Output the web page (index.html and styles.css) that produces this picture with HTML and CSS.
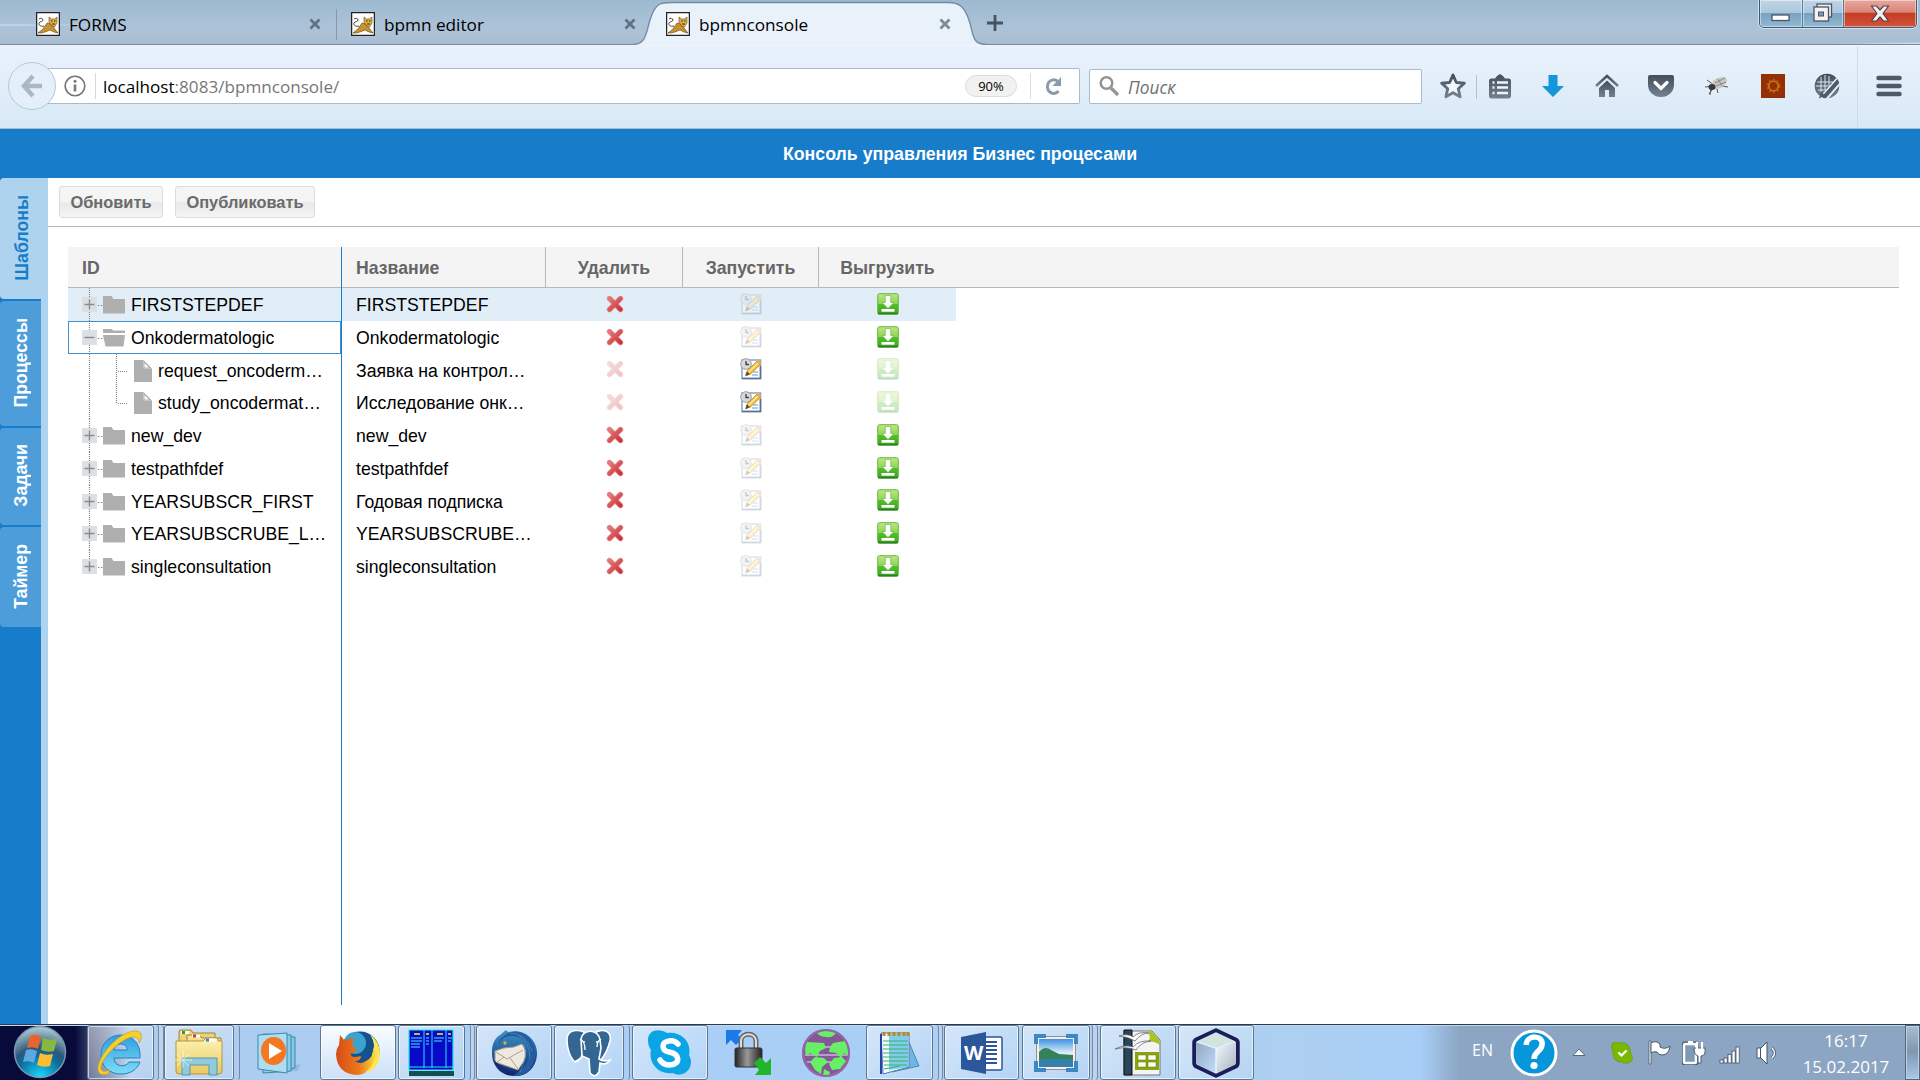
FILE: index.html
```html
<!DOCTYPE html>
<html lang="ru">
<head>
<meta charset="utf-8">
<title>bpmnconsole</title>
<link rel="stylesheet" href="styles.css">
</head>
<body>
<svg class="defs" aria-hidden="true">
  <defs>
    <linearGradient id="steel" x1="0" y1="0" x2="0" y2="1"><stop offset="0" stop-color="#434e5a"/><stop offset="1" stop-color="#748290"/></linearGradient>
    <linearGradient id="red" x1="0" y1="0" x2="1" y2="1"><stop offset="0" stop-color="#e07a7a"/><stop offset="1" stop-color="#cc3338"/></linearGradient>
    <linearGradient id="green" x1="0" y1="0" x2="0" y2="1"><stop offset="0" stop-color="#bfe67f"/><stop offset=".5" stop-color="#8dd552"/><stop offset=".52" stop-color="#50bf28"/><stop offset="1" stop-color="#3fa61f"/></linearGradient>
    <radialGradient id="orb" cx=".5" cy="1" r="1"><stop offset="0" stop-color="#19dcff"/><stop offset=".45" stop-color="#0b6c9c"/><stop offset=".6" stop-color="#2a5878"/><stop offset="1" stop-color="#b9cfd9"/></radialGradient>
    <linearGradient id="sky" x1="0" y1="0" x2="0" y2="1"><stop offset="0" stop-color="#3f92e4"/><stop offset=".5" stop-color="#dceefa"/></linearGradient>
    <linearGradient id="iefill" x1="0" y1="0" x2="0" y2="1"><stop offset="0" stop-color="#2b9fe0"/><stop offset="1" stop-color="#7edcf8"/></linearGradient>
    <linearGradient id="manila" x1="0" y1="0" x2="0" y2="1"><stop offset="0" stop-color="#fdf3b4"/><stop offset="1" stop-color="#e9c961"/></linearGradient>
    <linearGradient id="fox" x1="0" y1="0" x2="1" y2="0"><stop offset="0" stop-color="#d64b16"/><stop offset=".6" stop-color="#ee7a1a"/><stop offset="1" stop-color="#fbd83c"/></linearGradient>
    <linearGradient id="metal" x1="0" y1="0" x2="1" y2="0"><stop offset="0" stop-color="#222"/><stop offset=".45" stop-color="#999"/><stop offset="1" stop-color="#222"/></linearGradient>
    <linearGradient id="bird" x1="0" y1="0" x2="0" y2="1"><stop offset="0" stop-color="#3a93c8"/><stop offset="1" stop-color="#12266e"/></linearGradient>
    <linearGradient id="cubeleft" x1="0" y1="0" x2="1" y2="1"><stop offset="0" stop-color="#8faac0"/><stop offset="1" stop-color="#c3dcff"/></linearGradient>
    <linearGradient id="cuberight" x1="0" y1="0" x2="1" y2="1"><stop offset="0" stop-color="#f2f8ff"/><stop offset="1" stop-color="#a8b2bc"/></linearGradient>
    <symbol id="tomcat" viewBox="0 0 24 24"><rect x=".6" y=".6" width="22.8" height="22.8" fill="#fff" stroke="#222" stroke-width="1.3"/><path d="M2 21l5-4 4-6 4 1 3 4 4 5-4-1-4-2-5 2-4 1z" fill="#c8922e" stroke="#593c14" stroke-width=".6"/><path d="M13 5l2.500 2h3L21 5v6l-2.500 4-3-1-2.500-4z" fill="#dfb145" stroke="#5f4619" stroke-width=".6"/><path d="M8 14c-3 1-6-1-5-3s4-1 4-3-3-2-4-1" fill="none" stroke="#333" stroke-width=".9"/><path d="M15 9h1.500M18 9h1.500M16 12h3" stroke="#422" stroke-width="1"/></symbol>
    <symbol id="close" viewBox="0 0 12 12"><path d="M1.500 1.500l9 9M10.500 1.500l-9 9" stroke="#61717f" stroke-width="2.800"/></symbol>
    <symbol id="del" viewBox="0 0 18 18"><path d="M3.500 3.500l11 11M14.500 3.500l-11 11" stroke="#e58d8f" stroke-width="5.400" stroke-linecap="round"/><path d="M3.500 3.500l11 11M14.500 3.500l-11 11" stroke="url(#red)" stroke-width="4" stroke-linecap="round"/></symbol>
    <symbol id="run" viewBox="0 0 22 22"><rect x="2" y="2" width="18.500" height="18.500" fill="#fff" stroke="#8fa8c4" stroke-width="1.600"/><path d="M2 20.500h18.500V8" fill="none" stroke="#5d7288" stroke-width="1.600"/><path d="M13 14h5M12 17h6" stroke="#5a98d8" stroke-width="1.200"/><circle cx="6" cy="6" r="5.300" fill="#d7dadd" stroke="#9c9fa2" stroke-width="1"/><path d="M6 3v3.500h3" fill="none" stroke="#444" stroke-width="1.400"/><path d="M5.500 18l1.500-5 10-10 4 3L10.500 16z" fill="#f3bb3c" stroke="#a97126" stroke-width=".6"/><path d="M8 15L18 5" stroke="#ffec96" stroke-width="1.500"/><path d="M5.500 18l1.500-4.500 3 2.500z" fill="#5b4230"/><path d="M16 4l1.500-1.500h2l2 2-1.500 2.500z" fill="#eda567"/></symbol>
    <symbol id="down" viewBox="0 0 22 22"><rect x=".7" y=".7" width="20.600" height="20.600" rx="1.800" fill="url(#green)" stroke="#67b548" stroke-width="1"/><path d="M1 20.500h20" stroke="#2c7f28" stroke-width="1.500"/><path d="M8.300 2.500h5.400v7h3.200L11 15.500 5.100 9.500h3.200z" fill="#fff" stroke="#62b044" stroke-width=".6"/><rect x="4.500" y="16" width="13" height="2.700" fill="#fff"/></symbol>
    <symbol id="folder" viewBox="0 0 22 18"><path d="M0 0h8.500l2 3H22v14.500H0z" fill="#afafaf"/></symbol>
    <symbol id="openfolder" viewBox="0 0 22 18"><path d="M0 0h8.500l2 1.500H22V4H0z" fill="#afafaf"/><path d="M0 6h22l-1.500 11.500h-18z" fill="#afafaf"/></symbol>
    <symbol id="file" viewBox="0 0 18 22"><path d="M0 0h9.500v8.500H18V22H0z" fill="#afafaf"/><path d="M9.500 0L18 8.500H9.500z" fill="#afafaf"/><path d="M10.500 3v4.500H15z" fill="#fff"/></symbol>
    <symbol id="branchfolder" viewBox="0 0 63 33"><path d="M30 17.500h6" stroke="#888" stroke-dasharray="1.500 1.500"/><rect x="14" y="9" width="15" height="15" fill="#dcdfe3"/><path d="M16.500 16.500h10M21.500 11.500v10" stroke="#8b8b8b" stroke-width="1.400"/><use href="#folder" x="35" y="8" width="22" height="18"/></symbol>
    <symbol id="node" viewBox="0 0 63 33"><path d="M21.500 0V33" stroke="#848484" stroke-width="1.200" stroke-dasharray="1 1"/><use href="#branchfolder" width="63" height="33"/></symbol>
    <symbol id="nodelast" viewBox="0 0 63 33"><path d="M21.500 0V16" stroke="#848484" stroke-width="1.200" stroke-dasharray="1 1"/><use href="#branchfolder" width="63" height="33"/></symbol>
  </defs>
</svg>

<header class="tabstrip">
  <div class="tab"><svg class="fav"><use href="#tomcat"/></svg><span>FORMS</span><svg class="x"><use href="#close"/></svg></div>
  <div class="tab second"><svg class="fav"><use href="#tomcat"/></svg><span>bpmn editor</span><svg class="x"><use href="#close"/></svg></div>
  <div class="tab active">
    <svg class="shape" viewBox="0 0 356 45"><path d="M0 44.500C14 44.500 13 31 18 17S28 2.500 38 2.500H315C326 2.500 331 6 336 20S338 44.500 354 44.500V46H0z" fill="#e9f1fb"/><path d="M0 44.500C14 44.500 13 31 18 17S28 2.500 38 2.500H315C326 2.500 331 6 336 20S338 44.500 354 44.500" fill="none" stroke="#758ba3" stroke-width="1.400"/></svg>
    <svg class="fav"><use href="#tomcat"/></svg><span>bpmnconsole</span><svg class="x"><use href="#close"/></svg>
  </div>
  <svg class="plus" viewBox="0 0 16 16"><path d="M8 0v16M0 8h16" stroke="#46525f" stroke-width="2.800"/></svg>
  <div class="winbtns">
    <div class="min"><svg width="20" height="8"><rect x="1" y="1" width="17" height="5.500" fill="#fff" stroke="#4b5568" stroke-width="1.300"/></svg></div>
    <div class="max"><svg width="22" height="20" viewBox="0 0 22 20"><rect x="5" y="1" width="14.500" height="13" fill="#eee" stroke="#4b5568" stroke-width="1.300"/><rect x="2" y="4" width="14.500" height="14" fill="#f3f3f3" stroke="#4b5568" stroke-width="1.300"/><rect x="6.500" y="9" width="5" height="4" fill="#7e9cba" stroke="#4b5568"/></svg></div>
    <div class="quit"><svg width="22" height="20" viewBox="0 0 22 20"><path d="M2.500 2h5l3.500 4L14.500 2h5l-5.500 7.500 5.500 7.500h-5L11 13l-3.500 4h-5L8 9.500z" fill="#f2f2f2" stroke="#5b4350" stroke-width="1.200"/></svg></div>
  </div>
</header>

<nav class="navbar">
  <div class="back"><svg width="22" height="24" viewBox="0 0 22 24"><path d="M21 12H4M12 2L3 12l9 10" fill="none" stroke="#a9b8c4" stroke-width="4.500"/></svg></div>
  <div class="url">
    <svg class="info" viewBox="0 0 22 22"><circle cx="11" cy="11" r="9.800" fill="none" stroke="#777" stroke-width="1.600"/><path d="M11 9.500v7" stroke="#777" stroke-width="2.600"/><circle cx="11" cy="6.200" r="1.500" fill="#777"/></svg>
    <span class="address"><b>localhost</b>:8083/bpmnconsole/</span>
    <span class="zoom">90%</span>
    <span class="reload"><svg width="18" height="20" viewBox="0 0 18 20"><path d="M13.500 5.200A6.300 6.800 0 1 0 14.500 15" fill="none" stroke="#8b9aa9" stroke-width="3"/><path d="M17 1v9H8.500z" fill="#8b9aa9"/></svg></span>
  </div>
  <div class="search"><svg width="21" height="22" viewBox="0 0 21 22"><circle cx="7.500" cy="8" r="5.800" fill="none" stroke="#949494" stroke-width="2.500"/><path d="M12 13l7 7" stroke="#949494" stroke-width="3.200"/></svg><span>Поиск</span></div>
  <div class="tools">
    <svg class="t-star" viewBox="0 0 26 26"><path d="M13 2l3.300 7.500 8 .8-6 5.500 1.800 8L13 19.800l-7.100 4 1.800-8-6-5.500 8-.8z" fill="#f3f7fb" stroke="url(#steel)" stroke-width="2.900" stroke-linejoin="round"/></svg>
    <i class="t-sep"></i>
    <svg class="t-list" viewBox="0 0 22 25"><path d="M2.500 4.500H6L8 2l3-2 3 2 2 2.500h3.500Q22 4.500 22 7v15q0 2.500-2.500 2.500h-17Q0 24.500 0 22V7q0-2.500 2.500-2.500z" fill="url(#steel)"/><path d="M3.500 8.500h2M8 8.500h11M3.500 13.500h2M8 13.500h11M3.500 19h2M8 19h11" stroke="#eef4fb" stroke-width="2.400"/></svg>
    <svg class="t-down" viewBox="0 0 22 24"><path d="M6.500 1h9v11H22L11 23 0 12h6.500z" fill="#1496d8"/></svg>
    <svg class="t-home" viewBox="0 0 24 24"><path d="M1 12L12 2l11 10" fill="none" stroke="url(#steel)" stroke-width="2.500"/><path d="M4 14l8-7.500 8 7.500v9h-6v-7h-4v7H4z" fill="url(#steel)"/></svg>
    <svg class="t-pocket" viewBox="0 0 26 24"><path d="M2 1h22q2 0 2 2v8a13 12 0 0 1-26 0V3q0-2 2-2z" fill="url(#steel)"/><path d="M7 8.500l6 6 6-6" fill="none" stroke="#fff" stroke-width="3.200" stroke-linecap="round"/></svg>
    <svg class="t-bug" viewBox="0 0 24 22"><path d="M0 12l8-1M2 5l7 5M4 19l5-7M12 14l1 4M17 11l6 1M6 13l-1 7" stroke="#555" stroke-width="1"/><ellipse cx="14" cy="8" rx="8.500" ry="5" transform="rotate(-28 14 8)" fill="#c9c7c1"/><path d="M10 8l10-5M11 11l10-4M13 4l4 7" stroke="#888" stroke-width="1"/><ellipse cx="7" cy="12" rx="3.500" ry="3" fill="#39393a"/></svg>
    <svg class="t-gear" viewBox="0 0 24 24"><rect width="24" height="24" fill="#952f05"/><circle cx="12.500" cy="12" r="4.800" fill="none" stroke="#c97912" stroke-width="1.800"/><circle cx="12.500" cy="12" r="6.400" fill="none" stroke="#b05d0c" stroke-width="1.500" stroke-dasharray="2 2.100"/></svg>
    <svg class="t-globe" viewBox="0 0 26 26"><defs><clipPath id="disc"><circle cx="13" cy="13" r="12.500"/></clipPath></defs><g clip-path="url(#disc)"><circle cx="13" cy="13" r="12.500" fill="url(#steel)"/><path d="M3 9h17M2 13h14M4 17h9M7 4v15M11 2v15M15 3v9" stroke="#dce5ee" stroke-width="1"/><path d="M26 2L6 25M29 7L11 28" stroke="#eaf2fb" stroke-width="1.800"/><path d="M27 5L9 25" stroke="#4f5c69" stroke-width="3.500"/></g><path d="M5 25.500l2-7 4 4z" fill="#4f5c69"/></svg>
    <span class="t-menu"><svg width="26" height="22" viewBox="0 0 26 22"><path d="M2.500 3h21M2.500 11h21M2.500 19h21" stroke="#4d5966" stroke-width="4.500" stroke-linecap="round"/></svg></span>
  </div>
</nav>

<h1 class="title">Консоль управления Бизнес процесами</h1>

<main class="app">
  <aside class="side">
    <div class="vtab current"><span>Шаблоны</span></div>
    <div class="vtab v2"><span>Процессы</span></div>
    <div class="vtab v3"><span>Задачи</span></div>
    <div class="vtab v4"><span>Таймер</span></div>
  </aside>
  <section class="content">
    <div class="actions"><button class="b1">Обновить</button><button class="b2">Опубликовать</button></div>
    <div class="grid">
      <div class="frozen">
        <div class="head">ID</div>
        <div class="row hot"><svg class="branch"><use href="#node"/></svg>FIRSTSTEPDEF</div>
        <div class="row selected"><svg class="branch" viewBox="0 0 63 33"><path d="M21.500 0V33" stroke="#848484" stroke-width="1.200" stroke-dasharray="1 1"/><path d="M30 17.500h6" stroke="#888" stroke-dasharray="1.500 1.500"/><rect x="14" y="9" width="15" height="15" fill="#dcdfe3"/><path d="M16.500 16.500h10" stroke="#8b8b8b" stroke-width="1.400"/><use href="#openfolder" x="35" y="8" width="22" height="18"/></svg>Onkodermatologic</div>
        <div class="row"><svg class="branch child" viewBox="0 0 90 33"><path d="M21.500 0V33M48.500 0V33" stroke="#848484" stroke-width="1.200" stroke-dasharray="1 1"/><path d="M50 17.500h10" stroke="#848484" stroke-dasharray="1 1"/><use href="#file" x="66" y="6" width="18" height="22"/></svg>request_oncoderm…</div>
        <div class="row"><svg class="branch child" viewBox="0 0 90 33"><path d="M21.500 0V33M48.500 0V17" stroke="#848484" stroke-width="1.200" stroke-dasharray="1 1"/><path d="M50 17.500h10" stroke="#848484" stroke-dasharray="1 1"/><use href="#file" x="66" y="6" width="18" height="22"/></svg>study_oncodermat…</div>
        <div class="row"><svg class="branch"><use href="#node"/></svg>new_dev</div>
        <div class="row"><svg class="branch"><use href="#node"/></svg>testpathfdef</div>
        <div class="row"><svg class="branch"><use href="#node"/></svg>YEARSUBSCR_FIRST</div>
        <div class="row"><svg class="branch"><use href="#node"/></svg>YEARSUBSCRUBE_L…</div>
        <div class="row"><svg class="branch"><use href="#nodelast"/></svg>singleconsultation</div>
      </div>
      <div class="scroll">
        <div class="head cols"><span>Название</span><span>Удалить</span><span>Запустить</span><span>Выгрузить</span></div>
        <div class="row cols hot"><span>FIRSTSTEPDEF</span><svg class="del"><use href="#del"/></svg><svg class="run off"><use href="#run"/></svg><svg class="down"><use href="#down"/></svg></div>
        <div class="row cols"><span>Onkodermatologic</span><svg class="del"><use href="#del"/></svg><svg class="run off"><use href="#run"/></svg><svg class="down"><use href="#down"/></svg></div>
        <div class="row cols"><span>Заявка на контрол…</span><svg class="del off"><use href="#del"/></svg><svg class="run"><use href="#run"/></svg><svg class="down off"><use href="#down"/></svg></div>
        <div class="row cols"><span>Исследование онк…</span><svg class="del off"><use href="#del"/></svg><svg class="run"><use href="#run"/></svg><svg class="down off"><use href="#down"/></svg></div>
        <div class="row cols"><span>new_dev</span><svg class="del"><use href="#del"/></svg><svg class="run off"><use href="#run"/></svg><svg class="down"><use href="#down"/></svg></div>
        <div class="row cols"><span>testpathfdef</span><svg class="del"><use href="#del"/></svg><svg class="run off"><use href="#run"/></svg><svg class="down"><use href="#down"/></svg></div>
        <div class="row cols"><span>Годовая подписка</span><svg class="del"><use href="#del"/></svg><svg class="run off"><use href="#run"/></svg><svg class="down"><use href="#down"/></svg></div>
        <div class="row cols"><span>YEARSUBSCRUBE…</span><svg class="del"><use href="#del"/></svg><svg class="run off"><use href="#run"/></svg><svg class="down"><use href="#down"/></svg></div>
        <div class="row cols"><span>singleconsultation</span><svg class="del"><use href="#del"/></svg><svg class="run off"><use href="#run"/></svg><svg class="down"><use href="#down"/></svg></div>
      </div>
    </div>
  </section>
</main>

<footer class="taskbar">
  <div class="start"><svg width="54" height="54" viewBox="0 0 54 54"><circle cx="27" cy="27" r="25.500" fill="url(#orb)" stroke="#7797ad" stroke-width="1.500"/><path d="M17 11q6-3 11 1l-3 12q-5-3-11-1z" fill="#e8642c"/><path d="M30 13q6 3 14 1l-3 12q-6 2-13-1z" fill="#87b940"/><path d="M13 25q6-2 11 1l-3 12q-5-3-11-1z" fill="#5da8e1"/><path d="M27 28q6 3 13 1l-3 12q-7 2-13-1z" fill="#fbbd31"/></svg></div>
  <div class="task ie"><svg width="46" height="46" viewBox="0 0 46 46"><path fill-rule="evenodd" d="M44 28H18c0 9 12 10 15 4h11c-3 8-10 12-19 12C13 44 5 36 5 25S13 5 25 5c13 0 20 10 19 23zM18 20h13c0-8-12-8-13 0z" fill="url(#iefill)" stroke="#2580be" stroke-width="1"/><path d="M12 44C-2 48-1 34 12 18S42-3 45 4c1 3 0 6-2 9 0-8-8-7-16-2C15 18 4 33 5 38c0 4 4 4 9 2z" fill="#f7cf2d" stroke="#cc8d10" stroke-width=".6"/></svg></div><i class="stack two"></i>
  <div class="task explorer"><svg width="48" height="48" viewBox="0 0 48 48"><path d="M4 3q0-2 2-2h10l2 3h22v34H4z" fill="#ecd27d" stroke="#a48428"/><path d="M12 6h12l3 3h19v24H12z" fill="#f4e08d" stroke="#a48428"/><path d="M6 3.500h8" stroke="#fff" stroke-width="3"/><rect x="7" y="2" width="3" height="3" fill="#30953c"/><path d="M17 7h8" stroke="#fff" stroke-width="3"/><rect x="18" y="5.500" width="3" height="3" fill="#cf3825"/><path d="M1 12h27l3-3h12v3h4v30q0 3-3 3H4q-3 0-3-3z" fill="url(#manila)" stroke="#b99534"/><path d="M31 11h10" stroke="#fff" stroke-width="3"/><rect x="31" y="9.500" width="3" height="3" fill="#2d85c7"/><path d="M7 29h35v17h-8V36H15v10H7z" fill="#87cbe9" stroke="#4690b3" opacity=".9"/><path d="M8 22v17M0 31h17M2 25l12 12M14 25L2 37" stroke="#fff" opacity=".6"/></svg></div><i class="stack one"></i>
  <div class="plain wmp"><svg width="46" height="42" viewBox="0 0 46 42"><path d="M6 41L44 32l-4 7z" fill="#7e9dbd" opacity=".4"/><path d="M10 3l28 2v31l-28 4z" fill="#88c5e1" stroke="#378bad"/><path d="M6 2l28 1v36L6 41z" fill="#8acbe7" stroke="#378bad"/><path d="M1 3l29-2v40L1 37z" fill="#afdcf0" stroke="#378bad"/><ellipse cx="16.500" cy="19" rx="12.500" ry="14" fill="#f27822"/><path d="M12 11v16l13-8z" fill="#fff"/></svg></div>
  <div class="task bright firefox"><svg width="46" height="46" viewBox="0 0 46 46"><circle cx="25" cy="21" r="19.500" fill="#15518f"/><circle cx="20" cy="13" r="11" fill="#3ba3cf"/><path d="M35 4q10 8 10 20-1 14-13 19 6-9 5-19Q42 16 35 4z" fill="#fde452"/><path d="M5 5l5 6q4-4 9-2l-2 7q4 1 5 4-2 3-6 3-1 3 3 4 3 0 7-1 0 5-6 5 5 4 11 0 8-4 7-14 5 10-1 18Q31 45 22 45 2 44 1 24q0-5 3-9z" fill="url(#fox)"/></svg></div>
  <div class="task tc"><svg width="47" height="48" viewBox="0 0 47 48"><path d="M1 42h45v5H1z" fill="#144f50"/><path d="M1 1h44v40H1z" fill="#0808c8" stroke="#22e6ec" stroke-width="1.200"/><path d="M16 1v38M24 1v38M38 1v38M1 38h45" stroke="#22e6ec"/><path d="M6 5h6M18 5h3M29 5h6M40 5h3" stroke="#fff226" stroke-width="1.500"/><path d="M3 9h11M3 12h11M3 15h9M3 18h9M18 9h3M18 12h3M18 15h3M26 9h10M26 12h8M40 9h4M40 12h3" stroke="#43f1ed" stroke-width="1.200"/></svg></div><i class="stack three"></i>
  <div class="task bird"><svg width="48" height="48" viewBox="0 0 48 48"><path d="M16 1l2 2C36-1 48 12 47 26c-1 14-12 22-23 21C11 47 1 37 2 22c0-7 3-13 8-16z" fill="url(#bird)"/><path d="M5 22l9-3q10 0 18-4 6 8 2 17l-6 9L5 33z" fill="#efe8dc" stroke="#a19a91"/><path d="M6 23l11 7 16-9M14 28l-8 6M20 29l8 11" fill="none" stroke="#aaa092"/><path d="M9 17q1-9 12-10 13 0 17 12 4 14-10 24l-5 4q20 0 22-21Q45 8 30 3 20 1 14 7q-6 4-5 10z" fill="#245c9d"/><path d="M20 4q16 0 22 18M28 6q12 6 12 24M34 15q4 12-4 28" fill="none" stroke="#4da0cf" stroke-width="1" opacity=".6"/><path d="M3 30q5 15 21 16L7 34z" fill="#142b75"/><circle cx="15" cy="14" r="1.700" fill="#d1b240"/></svg></div>
  <div class="task pg"><svg width="46" height="48" viewBox="0 0 46 48"><g fill="#336791" stroke="#fff" stroke-width="1.600"><path d="M1 11C1-1 13 1 18 3l1 12-4 14-6 4C3 28 1 17 1 11z"/><path d="M30 3c8-4 16 0 14 9-2 8-5 14-9 19l-7-2z"/><path d="M15 10C17-1 33 0 34 11l1 8-2 11c4 3 8 2 11 1-3 5-8 4-10 3l-1 9q-4 7-9 1l-1-14-7-3z"/></g><path d="M14 29q-1 5-5 3M14 10q5 2 5 11M35 10q-4 2-4 8" fill="none" stroke="#fff" stroke-width="1.300"/><circle cx="18" cy="13" r="1" fill="#fff"/><circle cx="31" cy="13" r="1" fill="#fff"/></svg></div><i class="stack one-b"></i>
  <div class="task skype"><svg width="46" height="46" viewBox="0 0 46 46"><path d="M1 10C1 0 12-2 20 3c14-2 25 9 22 22 7 13-6 24-16 18C11 45 1 33 4 20Q1 16 1 10z" fill="#0ba4e4"/><path d="M31 14q-4-4-9-3c-8 1-8 9 0 11 11 2 12 12 1 13q-7 0-10-5" fill="none" stroke="#fff" stroke-width="5.500" stroke-linecap="round"/></svg></div>
  <div class="plain lock"><svg width="46" height="48" viewBox="0 0 46 48"><path d="M1 1h16l-4 5 4 4-6 6-5-5-5 5z" fill="#1b79e8"/><path d="M16 20V12c0-9 15-9 15 0v8" fill="none" stroke="#666" stroke-width="5"/><path d="M16 20V12c0-9 15-9 15 0v8" fill="none" stroke="#ddd" stroke-width="2"/><rect x="10" y="19" width="27" height="19" rx="1.500" fill="url(#metal)" stroke="#333"/><path d="M29 34l6-6 6 6 5-5v17H30l4-5z" fill="#21b629"/></svg></div>
  <div class="plain globe"><svg width="50" height="50" viewBox="0 0 50 50"><circle cx="25" cy="25" r="23" fill="#855797" stroke="#9f72ab" stroke-width="2"/><path d="M5 19h40M4 27h42M6 34h38" stroke="#ba9aca" stroke-width="2"/><path d="M16 5q9-4 19 0-3 5-10 4-6 0-9-4zM6 14l17 1 2 5-6 3-3 6-7-4-4 3q-2-8 1-14zm8 15l9 1 4 4-6 5-1 7-6-4-5-8zm18-14l12-2q4 7 3 15l-4-3-3 5-5-5-7-1 1-5zm1 15l8-1 4 4-6 8-8 1-3-6zM23 41l6 3-1 4h-6z" fill="#67f065"/><circle cx="25" cy="25" r="23" fill="none" stroke="#9466a4" stroke-width="2"/></svg></div>
  <div class="task note"><svg width="42" height="46" viewBox="0 0 42 46"><path d="M27 5L40 36l-27 6z" fill="#6fb6e4" stroke="#468bb8"/><path d="M2 3h28v34L4 44z" fill="#effafa" stroke="#5577ba"/><path d="M10 4h19v33l-19 3z" fill="#53b8e4" opacity=".7"/><path d="M4 11h25M4 15h25M4 19h25M4 23h25M4 27h25M4 31h25M5 35h23M5 39l16-3" stroke="#36b46c" stroke-width="1"/><path d="M2 4v40" stroke="#2c3eaa" stroke-width="2"/><path d="M5 6V2M10 6V2M15 6V2M20 6V2M25 6V2M29 6V2" stroke="#b68a24" stroke-width="3"/></svg></div><i class="stack three"></i>
  <div class="task word"><svg width="42" height="42" viewBox="0 0 42 42"><rect x="17" y="5" width="24" height="33" rx="1.500" fill="#fff" stroke="#2b579a" stroke-width="1.500"/><path d="M24 10h12M24 14h12M24 18h12M24 22h12M24 27h12M24 31h12" stroke="#2b579a" stroke-width="2"/><path d="M0 5L25 0v42L0 37z" fill="#2b579a"/><text x="3" y="28" class="word-mark">W</text></svg></div>
  <div class="task image"><svg width="46" height="40" viewBox="0 0 46 40"><rect x="3.500" y="3.500" width="39" height="33" fill="#f3eee8" stroke="#998f88"/><path d="M1 1h12v4H5v6H1zM33 1h12v10h-4V5h-8zM1 28h4v7h8v4H1zM41 28h4v11H33v-4h8z" fill="#3a88c5"/><rect x="6" y="6" width="34" height="28" fill="url(#sky)"/><path d="M6 19q6-7 12-2l8 4 14 1v4H6z" fill="#34825a"/><path d="M6 26h34v8H6z" fill="#367faa"/></svg></div><i class="stack two-b"></i>
  <div class="task office"><svg width="48" height="48" viewBox="0 0 48 48"><path d="M10 2h28l8 9v35H10z" fill="#f4f4f4" stroke="#777"/><path d="M10 1h8v45h-8z" fill="#29455b" stroke="#111"/><path d="M33 1q12 3 13 15-7-5-12-3 4-5-1-12z" fill="#a7c71f"/><path d="M5 7q9-3 14 1 6-6 16-4-8 0-14 8-6-4-16-5zm-4 13q10-5 18-2 6-7 18-6-10 1-15 9-9-4-21-1z" fill="#fff" stroke="#667" stroke-width=".8"/><rect x="21" y="23" width="24" height="18" fill="#89a50e"/><path d="M24 26h8v5h-8zM34 26h8v5h-8zM24 33h8v5h-8zM34 33h8v5h-8z" fill="#f9fff0" stroke="#657b10" stroke-width=".5"/></svg></div>
  <div class="task cube"><svg width="48" height="50" viewBox="0 0 46 48"><path d="M23 2l19 9q2 1 2 3v19q0 3-2 4l-19 9-19-9q-2-1-2-4V14q0-2 2-3z" fill="#bbcce4" stroke="#1b1d5a" stroke-width="3.600" stroke-linejoin="round"/><path d="M23 4.500l17.500 8L23 19 5.500 12.500z" fill="#d0e5dc"/><path d="M4 14l19 6v23.500L6 35q-2-1-2-3z" fill="url(#cubeleft)"/><path d="M42 14l-19 6v23.500L40 35q2-1 2-3z" fill="url(#cuberight)"/><path d="M5 13l18 6.500 18-6.500M23 20v23" fill="none" stroke="#eaf4ff" stroke-width="1.300"/></svg></div>
  <div class="tray">
    <span class="lang">EN</span>
    <svg class="help" width="48" height="48" viewBox="0 0 48 48"><circle cx="24" cy="24" r="22" fill="#0796da" stroke="#fff" stroke-width="3"/><path d="M16 16C17 5 34 6 32 16c-1 7-8 6-8 14" fill="none" stroke="#fff" stroke-width="5.500"/><circle cx="24" cy="36.500" r="3.600" fill="#fff"/></svg>
    <svg class="up" width="14" height="9" viewBox="0 0 14 9"><path d="M7 1l6 6.500H1z" fill="#fff" stroke="#536a81"/></svg>
    <svg class="sk" width="22" height="22" viewBox="0 0 22 22"><path d="M1 2q3-4 9-1 7-1 9 6l1 5q4 7-3 9-4 1-6-1Q2 20 2 11 0 6 1 2z" fill="#7ab800" stroke="#538b12" stroke-dasharray="1 1"/><path d="M7.500 10.500l3 3 5-5" fill="none" stroke="#fff" stroke-width="2.200"/></svg>
    <svg class="flag" width="24" height="25" viewBox="0 0 24 25"><path d="M2 1h2v23H2z" fill="#fff" stroke="#46566b" stroke-width=".8"/><path d="M4 3q5-3 9 1v3q5 3 10-1-1 9-8 9-4 0-5-3-4-1-6 1z" fill="#fff" stroke="#46566b"/></svg>
    <svg class="batt" width="24" height="25" viewBox="0 0 24 25"><rect x="1.500" y="3.500" width="13" height="20" rx="1" fill="#8099b7" stroke="#46566b" stroke-width="3.800"/><rect x="2" y="4" width="12" height="19" rx="1" fill="#8099b7" stroke="#fff" stroke-width="2.500"/><path d="M6 1h5v3H6z" fill="#fff"/><path d="M12 8h11q1 8-4 8v7h-3v-7q-4-1-4-8z" fill="#fff" stroke="#485b70" stroke-width="1"/><path d="M15 2v7M20 2v7" stroke="#fff" stroke-width="2.200"/></svg>
    <svg class="signal" width="22" height="18" viewBox="0 0 22 18"><g fill="#fff" stroke="#435269" stroke-width=".8"><rect x="1" y="14" width="3.200" height="3"/><rect x="5" y="12" width="3.200" height="5"/><rect x="9" y="8.500" width="3.200" height="8.500"/><rect x="13" y="5" width="3.200" height="12"/><rect x="17" y="1" width="3.200" height="16"/></g></svg>
    <svg class="speaker" width="22" height="24" viewBox="0 0 22 24"><path d="M1 7h4l6-6v22l-6-6H1z" fill="#fff" stroke="#435269"/><path d="M4.500 7v10" stroke="#435269"/><path d="M16 7q5 5 0 10" fill="none" stroke="#435269" stroke-width="3"/><path d="M16 7q5 5 0 10" fill="none" stroke="#fff" stroke-width="1.500"/></svg>
    <div class="clock"><span>16:17</span><span>15.02.2017</span></div>
    <div class="desk"></div>
  </div>
</footer>
</body>
</html>
```
FILE: styles.css
```css
* { box-sizing: border-box; }
body { margin: 0; width: 1920px; height: 1080px; overflow: hidden; display: flex; flex-direction: column; background: #fff; font-family: "Liberation Sans", Arial, sans-serif; color: #000; }
svg { display: block; flex: none; }
.defs { position: absolute; width: 0; height: 0; }

/* browser tabs */
.tabstrip { height: 45px; flex: none; display: flex; align-items: flex-start; border-bottom: 1px solid #758ba3; font-family: "Open Sans", "Noto Sans", sans-serif; font-size: 17.200px; background: radial-gradient(ellipse at 0 25px, #cde3fa 0, rgba(190,212,235,.5) 60px, transparent 130px), radial-gradient(ellipse at 1920px 44px, #d0e6ff 0, transparent 90px), linear-gradient(#9cb9d0, #a9c1d6 50%, #aec2d6 75%, #a8bdd3); }
.tab { height: 40px; width: 336px; display: flex; align-items: center; padding-left: 36px; padding-top: 8px; position: relative; }
.tab span { margin-left: 9px; padding-top: 1px; line-height: 24px; }
.tab .x { width: 12px; height: 12px; margin-left: auto; margin-right: 15px; }
.tab.second { width: 315px; padding-left: 15px; }
.tab.second::before { content: ""; position: absolute; left: 0; top: 9px; width: 1px; height: 31px; background: #8499ae; }
.tab.active { width: 315px; padding-left: 15px; }
.tab.active > .fav, .tab.active > span, .tab.active > .x { z-index: 1; }
.tab.active .x { opacity: .8; }
.tab .shape { position: absolute; left: -18px; top: 0; width: 356px; height: 45px; }
.fav { width: 24px; height: 24px; }
.plus { width: 16px; height: 16px; margin: 15px 0 0 21px; z-index: 1; }
.winbtns { width: 158px; height: 28px; margin-left: auto; margin-right: 3px; display: flex; border: 1px solid #43576c; border-top: 0; border-radius: 0 0 5px 5px; box-shadow: 0 0 0 1px #d1e3f2; overflow: hidden; }
.winbtns div { display: flex; justify-content: center; background: linear-gradient(#c1d5e4, #a9c7de 48%, #79a2c0 50%, #92b9d3); border-right: 1px solid #597a95; box-shadow: inset 0 0 0 1px rgba(255,255,255,.45); }
.winbtns .min { width: 43px; padding-top: 14px; }
.winbtns .max { width: 41px; padding-top: 3px; }
.winbtns .quit { flex: 1; padding-top: 4px; border: 0; background: linear-gradient(#e6a89c, #dc8477 45%, #c43d25 50%, #d05438); }

/* browser toolbar */
.navbar { height: 84px; flex: none; display: flex; align-items: flex-start; background: linear-gradient(#e9f2fc, #d9e9f7); border-bottom: 1px solid #a7bccd; border-top: 1px solid #eef5fc; font-family: "Open Sans", "Noto Sans", sans-serif; }
.back { width: 48px; height: 48px; margin: 16px 0 0 8px; border-radius: 50%; border: 1px solid #b8c8d6; background: #e5effa; display: flex; align-items: center; justify-content: center; z-index: 1; }
.url { width: 1032px; height: 36px; margin: 22px 0 0 -8px; border: 1px solid #a9bacb; border-left: 0; border-radius: 0 2px 2px 0; background: #fff; display: flex; align-items: center; }
.info { width: 22px; height: 22px; margin-left: 16px; }
.address { margin-left: 9px; padding-left: 7px; padding-top: 2px; border-left: 1px solid #d8d8d8; line-height: 24px; font-size: 17.100px; color: #777; }
.address b { font-weight: 400; color: #000; }
.zoom { margin-left: auto; width: 52px; height: 22px; border-radius: 11px; border: 1px solid #ddd; background: #f1f1f1; font-size: 13px; line-height: 21px; text-align: center; }
.reload { margin-left: 13px; width: 49px; padding: 3px 0 3px 13px; border-left: 1px solid #ddd; }
.search { width: 333px; height: 35px; margin: 23px 0 0 9px; border: 1px solid #a9bacb; border-radius: 2px; background: #fff; display: flex; align-items: center; padding-left: 9px; font-size: 17.300px; font-style: italic; color: #6f6f6f; }
.search svg { margin-top: -2px; }
.search span { margin-left: 8px; padding-top: 1px; }
.tools { flex: 1; height: 82px; display: flex; align-items: center; }
.tools > svg { margin-top: -2px; }
.t-star { width: 26px; height: 26px; margin-left: 18px; }
.t-sep { width: 1px; height: 24px; margin-left: 10px; background: #b3c1cf; }
.t-list { width: 22px; height: 25px; margin-left: 12px; }
.t-down { width: 22px; height: 24px; margin-left: 31px; }
.t-home { width: 24px; height: 24px; margin-left: 31px; }
.t-pocket { width: 26px; height: 24px; margin-left: 29px; }
.t-bug { width: 24px; height: 22px; margin-left: 31px; }
.t-gear { width: 24px; height: 24px; margin-left: 32px; }
.t-globe { width: 26px; height: 26px; margin-left: 29px; }
.t-menu { margin-left: 17px; height: 82px; padding: 29px 0 0 18px; border-left: 1px solid #cfdbe6; }

/* console */
.title { height: 49px; flex: none; margin: 0; background: #177dcb; color: #fff; font-size: 17.750px; line-height: 50px; text-align: center; }
.app { height: 846px; flex: none; display: flex; }
.side { width: 48px; background: linear-gradient(90deg, #177dcb 41px, #aed3ee 41px); display: flex; flex-direction: column; }
.vtab { width: 41px; border-radius: 4px 0 0 4px; background: #4d9ddb; color: #fff; font-weight: 700; font-size: 17.700px; display: flex; align-items: center; justify-content: center; padding: 0 0 2px 2px; }
.vtab span { writing-mode: vertical-rl; transform: rotate(180deg); }
.vtab.current { width: 48px; height: 121px; background: #aed3ee; color: #177dcb; padding: 0 4px 2px 0; }
.v2 { height: 125px; margin-top: 2px; }
.v3 { height: 97px; margin-top: 2px; }
.v4 { height: 100px; margin-top: 2px; }
.content { flex: 1; }
.actions { height: 49px; border-bottom: 1px solid #b9b9b9; padding: 8px 0 0 11px; display: flex; gap: 12px; }
.actions button { height: 32px; padding: 1px 0 0; border: 1px solid #dcdcdc; border-radius: 3px; background: linear-gradient(#f5f5f5 50%, #e9e9e9 52%, #f4f4f4); color: #6a6a6a; font: 700 16.400px "Liberation Sans", Arial, sans-serif; white-space: nowrap; }
.b1 { width: 104px; }
.b2 { width: 140px; }
.grid { margin: 20px 0 0 20px; width: 1831px; height: 758px; display: flex; font-size: 17.670px; white-space: nowrap; }
.frozen { width: 274px; border-right: 1px solid #177dcb; }
.scroll { flex: 1; }
.head { height: 41px; background: #f4f4f4; border-bottom: 1px solid #b9b9b9; color: #666; font-weight: 700; line-height: 42px; }
.frozen .head { padding-left: 14px; }
.row { height: 33px; padding-top: 2px; display: flex; align-items: center; }
.row svg { margin-top: -4px; }
.row:nth-child(4n) { height: 32px; }
.hot { background: #e1eef8; }
.scroll .hot { width: 614px; }
.selected { outline: 1px solid #4290ce; outline-offset: -1px; }
.row .branch { width: 63px; height: 33px; margin-top: -2px; }
.row .branch.child { width: 90px; }
.cols { display: grid; grid-template-columns: 204px 137px 136px 137px; align-items: center; justify-items: center; }
.cols span:first-child { justify-self: stretch; padding-left: 14px; }
.head.cols span { justify-self: stretch; text-align: center; border-right: 1px solid #b9b9b9; height: 40px; }
.head.cols span:first-child { text-align: left; }
.head.cols span:last-child { border: 0; }
.del { width: 18px; height: 18px; }
.run, .down { width: 22px; height: 22px; }
.off { opacity: .28; }

/* taskbar */
.taskbar { height: 56px; flex: none; display: flex; align-items: stretch; border-top: 1px solid #293d55; background: linear-gradient(90deg, #080b3a 75px, #adcbee 130px, #a9cff7 700px, #adcff0 1300px, #a8cff8 1420px, #8ca5c3 1460px); box-shadow: inset 0 1px 0 #c3d5e6; }
.taskbar > div { flex: none; }
.start { width: 87px; display: flex; padding-left: 13px; }
.task { display: flex; align-items: center; justify-content: center; border: 1px solid #5f7590; border-radius: 3px; background: linear-gradient(135deg, rgba(255,255,255,.5), rgba(255,255,255,.1)); box-shadow: inset 0 0 0 1px rgba(255,255,255,.6); }
.task.bright { background: linear-gradient(#fafdff, #cbe0f7); }
.plain { display: flex; align-items: center; justify-content: center; }
.stack { flex: none; border: solid #7489a2; border-width: 0 1px 0 0; border-radius: 0 3px 3px 0; }
.ie { width: 67px; padding-right: 3px; }
.two { width: 10px; box-shadow: inset -4px 0 0 #bcd3eb, inset -5px 0 0 #7489a2; }
.explorer { width: 70px; }
.one { width: 6px; }
.wmp { width: 80px; }
.firefox { width: 76px; }
.tc { width: 67px; margin-left: 2px; }
.three { width: 10px; box-shadow: inset -3px 0 0 #bcd3eb, inset -4px 0 0 #7489a2; }
.bird { width: 76px; margin-left: 1px; }
.pg { width: 70px; margin-left: 2px; }
.one-b { width: 6px; margin-right: 2px; }
.skype { width: 76px; }
.lock { width: 79px; }
.globe { width: 79px; padding-right: 2px; }
.note { width: 67px; }
.word { width: 75px; margin-left: 1px; }
.image { width: 68px; margin-left: 3px; }
.two-b { width: 8px; margin-right: 2px; box-shadow: inset -4px 0 0 #bcd3eb, inset -5px 0 0 #7489a2; }
.office { width: 76px; }
.cube { width: 76px; margin-left: 2px; }
.word-mark { font: 700 20px "Open Sans", sans-serif; fill: #fff; }
.tray { margin-left: auto; width: 448px; display: flex; align-items: center; color: #fff; font-family: "Open Sans", "Noto Sans", sans-serif; }
.lang { width: 38px; font-size: 16px; margin-top: -5px; }
.up { margin: -1px 0 0 14px; }
.sk { margin-left: 25px; }
.flag { margin-left: 14px; }
.batt { margin-left: 11px; }
.signal { margin: 5px 0 0 13px; }
.speaker { margin-left: 15px; }
.clock { width: 92px; margin-left: 22px; padding-top: 3px; display: flex; flex-direction: column; align-items: center; font-size: 17px; line-height: 26px; }
.desk { width: 15px; align-self: stretch; margin-left: auto; border: 1px solid #52677e; background: linear-gradient(#a9bdd0, #7e97ae 48%, #a8c8ea); box-shadow: inset 0 0 0 1px #c0d0e0; }
```
